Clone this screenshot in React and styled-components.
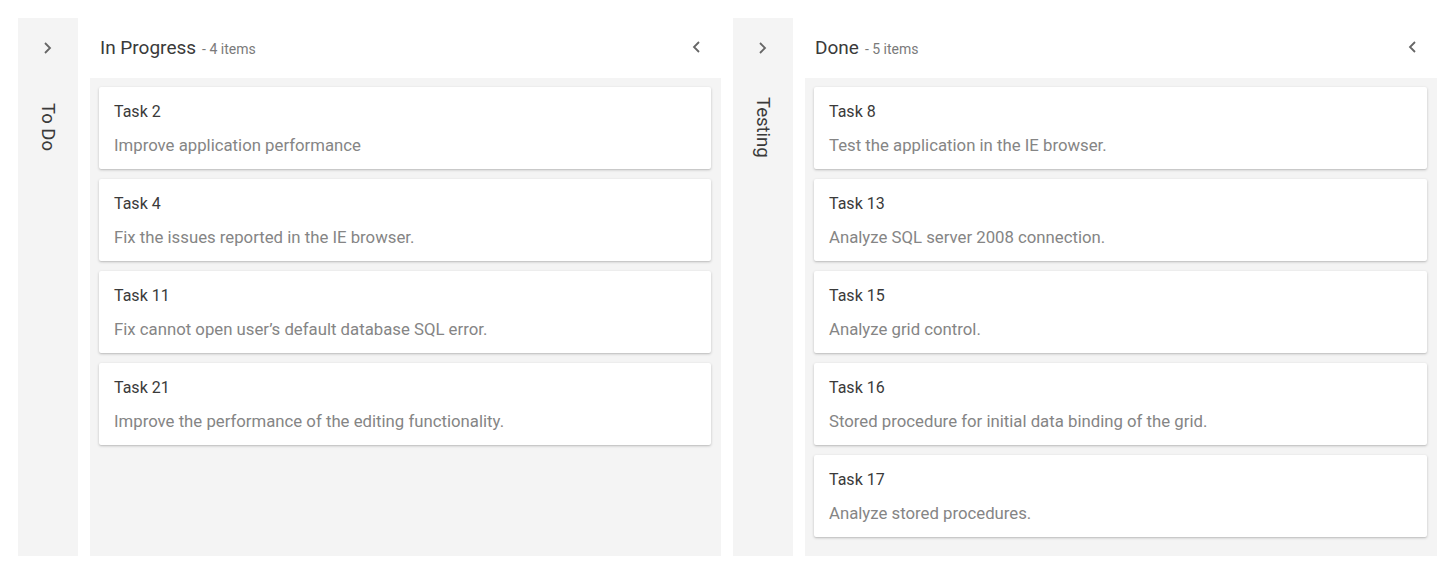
import React from "react";
import styled, { createGlobalStyle } from "styled-components";

const Global = createGlobalStyle`
  html, body { margin: 0; padding: 0; background: #fff; }
  body { font-family: Roboto, "Noto Sans", sans-serif; }
`;

const Board = styled.div`
  display: flex;
  gap: 12px;
  padding: 18px;
  height: 538px;
`;

const Collapsed = styled.div`
  width: 60px;
  flex: 0 0 60px;
  background: #f4f4f4;
  display: flex;
  flex-direction: column;
  align-items: center;
`;

const CollapsedHead = styled.div`
  height: 60px;
  display: flex;
  align-items: center;
  justify-content: center;
  padding-right: 2px;
`;

const VerticalTitle = styled.div`
  writing-mode: vertical-rl;
  font-size: 18.5px;
  color: #3a3a3a;
  margin-top: ${(p) => p.$offset || 22}px;
  line-height: 1;
`;

const Column = styled.div`
  flex: ${(p) => p.$grow || 1} 1 0;
  min-width: 0;
  display: flex;
  flex-direction: column;
`;

const ColumnHead = styled.div`
  height: 60px;
  display: flex;
  align-items: center;
  justify-content: space-between;
  padding: 0 16px 2px 10px;
  box-sizing: border-box;
`;

const HeadTitle = styled.div`
  display: flex;
  align-items: baseline;
  gap: 6px;
`;

const Title = styled.span`
  font-size: 19px;
  color: #3a3a3a;
`;

const Count = styled.span`
  font-size: 14px;
  color: #7a7a7a;
`;

const Content = styled.div`
  flex: 1;
  background: #f4f4f4;
  padding: 9px 10px 9px 9px;
  display: flex;
  flex-direction: column;
  gap: 10px;
`;

const Card = styled.div`
  background: #fff;
  border-radius: 2px;
  box-shadow: 0 1px 3px rgba(0, 0, 0, 0.2), 0 1px 1px rgba(0, 0, 0, 0.06);
  padding: 13px 15px 12px;
`;

const CardTitle = styled.div`
  font-size: 16px;
  line-height: 24px;
  color: #3a3a3a;
`;

const CardText = styled.div`
  margin-top: 9px;
  font-size: 16.75px;
  line-height: 24px;
  color: #858585;
`;

const IconButton = styled.span`
  display: inline-flex;
  width: 16px;
  height: 16px;
  align-items: center;
  justify-content: center;
  color: #666;
`;

const Chevron = ({ dir }) => (
  <IconButton>
    <svg width="14" height="14" viewBox="0 0 14 14" fill="none">
      {dir === "right" ? (
        <path d="M5 2 L10 7 L5 12" stroke="currentColor" strokeWidth="1.8" />
      ) : (
        <path d="M9 2 L4 7 L9 12" stroke="currentColor" strokeWidth="1.8" />
      )}
    </svg>
  </IconButton>
);

const inProgress = [
  ["Task 2", "Improve application performance"],
  ["Task 4", "Fix the issues reported in the IE browser."],
  ["Task 11", "Fix cannot open user’s default database SQL error."],
  ["Task 21", "Improve the performance of the editing functionality."],
];

const done = [
  ["Task 8", "Test the application in the IE browser."],
  ["Task 13", "Analyze SQL server 2008 connection."],
  ["Task 15", "Analyze grid control."],
  ["Task 16", "Stored procedure for initial data binding of the grid."],
  ["Task 17", "Analyze stored procedures."],
];

const CollapsedColumn = ({ title, offset }) => (
  <Collapsed>
    <CollapsedHead>
      <Chevron dir="right" />
    </CollapsedHead>
    <VerticalTitle $offset={offset}>{title}</VerticalTitle>
  </Collapsed>
);

const ExpandedColumn = ({ title, cards, grow }) => (
  <Column $grow={grow}>
    <ColumnHead>
      <HeadTitle>
        <Title>{title}</Title>
        <Count>- {cards.length} items</Count>
      </HeadTitle>
      <Chevron dir="left" />
    </ColumnHead>
    <Content>
      {cards.map(([t, d]) => (
        <Card key={t}>
          <CardTitle>{t}</CardTitle>
          <CardText>{d}</CardText>
        </Card>
      ))}
    </Content>
  </Column>
);

export default function App() {
  return (
    <>
      <Global />
      <Board>
        <CollapsedColumn title="To Do" offset={25} />
        <ExpandedColumn title="In Progress" cards={inProgress} grow={631} />
        <CollapsedColumn title="Testing" offset={19} />
        <ExpandedColumn title="Done" cards={done} grow={632} />
      </Board>
    </>
  );
}
